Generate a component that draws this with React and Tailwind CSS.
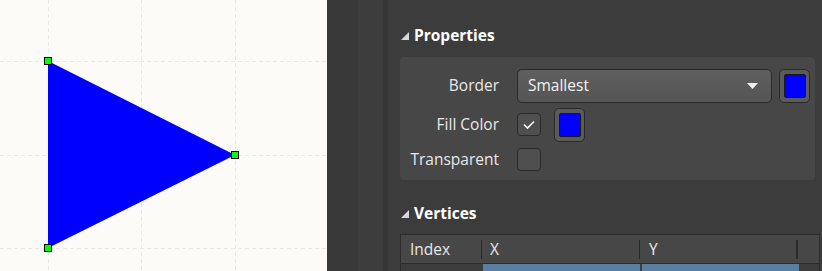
export default function App() {
  const font = { fontFamily: '"Open Sans", "Noto Sans", sans-serif' };
  return (
    <div className="flex w-[822px] h-[271px] overflow-hidden" style={font}>
      {/* canvas */}
      <div className="w-[327px] h-full bg-[#fdfbf7] shrink-0">
        <svg width="327" height="271">
          {[48, 141, 235].map((x) => (
            <line key={"v" + x} x1={x + 0.5} y1="0" x2={x + 0.5} y2="271" stroke="#ebe9e4" strokeDasharray="4 3" />
          ))}
          {[61, 155, 248].map((y) => (
            <line key={"h" + y} x1="0" y1={y + 0.5} x2="327" y2={y + 0.5} stroke="#ebe9e4" strokeDasharray="4 3" />
          ))}
          <polygon points="48,61 48,248 235,155" fill="#0000ff" />
          {[[48, 61], [48, 248], [235, 155]].map(([x, y]) => (
            <rect key={x + "-" + y} x={x - 3.5} y={y - 3.5} width="7" height="7" fill="#00ff00" stroke="#000" strokeWidth="1" />
          ))}
        </svg>
      </div>

      {/* side strips */}
      <div className="w-[31px] h-full bg-[#393939] shrink-0" />
      <div className="w-[25px] h-full bg-[#3d3d3d] shrink-0" />
      <div className="w-[5px] h-full bg-[#353535] shrink-0" />

      {/* properties panel */}
      <div className="flex-1 h-full bg-[#3c3c3c] pl-[12px] pr-[2px] text-[#e8e8e8]">
        <div className="flex items-center gap-[5px] h-[28px] mt-[22px]">
          <svg width="8" height="8" className="ml-[1px]"><polygon points="8,0 8,8 0,8" fill="#d8d8d8" /></svg>
          <span className="text-[15.5px] font-bold text-white">Properties</span>
        </div>

        <div className="mt-[7px] mr-[5px] rounded-[4px] bg-[#474747] h-[123px] pt-[12px]">
          <div className="flex items-center h-[34px]">
            <span className="w-[99px] text-right text-[15.5px]">Border</span>
            <div className="ml-[18px] w-[255px] h-[34px] rounded-[5px] border border-[#2a2a2a] bg-gradient-to-b from-[#5f5f5f] to-[#555555] flex items-center pl-[10px] pr-[13px]">
              <span className="flex-1 text-[15.5px] text-[#f2f2f2]">Smallest</span>
              <svg width="11" height="6"><polygon points="0,0 11,0 5.5,6" fill="#f0f0f0" /></svg>
            </div>
            <Swatch className="ml-[7px]" />
          </div>

          <div className="flex items-center h-[31px] mt-[6px]">
            <span className="w-[99px] text-right text-[15.5px]">Fill Color</span>
            <div className="ml-[18px] w-[24px] h-[23px] rounded-[4px] border border-[#2a2a2a] bg-[#4f4f4f] flex items-center justify-center">
              <svg width="14" height="11" viewBox="0 0 14 11"><path d="M2 5.5 L5.5 9 L12 2.5" fill="none" stroke="#f2f2f2" strokeWidth="1.7" /></svg>
            </div>
            <Swatch className="ml-[13px]" />
          </div>

          <div className="flex items-center h-[23px] mt-[8px]">
            <span className="w-[99px] text-right text-[15.5px]">Transparent</span>
            <div className="ml-[18px] w-[24px] h-[23px] rounded-[4px] border border-[#2a2a2a] bg-[#4f4f4f]" />
          </div>
        </div>

        <div className="flex items-center gap-[5px] h-[28px] mt-[20px]">
          <svg width="8" height="8" className="ml-[1px]"><polygon points="8,0 8,8 0,8" fill="#d8d8d8" /></svg>
          <span className="text-[15.5px] font-bold text-white">Vertices</span>
        </div>

        <div className="mt-[6px] border-t border-l border-r border-[#2c2c2c] bg-[#474747]">
          <div className="flex h-[29px] items-center border-b border-[#2c2c2c] text-[15.5px]">
            <div className="w-[81px] pl-[9px] border-r border-[#2a2a2a] h-[19px] leading-[19px]">Index</div>
            <div className="w-[158px] pl-[8px] border-r border-[#2a2a2a] h-[19px] leading-[19px]">X</div>
            <div className="w-[158px] pl-[9px] border-r-2 border-[#2a2a2a] h-[19px] leading-[19px]">Y</div>
            <div className="flex-1" />
          </div>
          <div className="flex h-[10px] bg-[#3c3c3c]">
            <div className="w-[81px]" />
            <div className="w-[157px] ml-[1px] bg-[#5b7fa3]" />
            <div className="w-[157px] ml-[2px] bg-[#5b7fa3]" />
            <div className="flex-1" />
          </div>
        </div>
      </div>
    </div>
  );
}

function Swatch({ className }) {
  return (
    <div className={"w-[31px] h-[34px] rounded-[5px] border border-[#2a2a2a] bg-[#5a5a5a] flex items-center justify-center " + className}>
      <div className="w-[22px] h-[24px] rounded-[2px] bg-[#0000ff] border border-[#1a1a1a]" />
    </div>
  );
}
